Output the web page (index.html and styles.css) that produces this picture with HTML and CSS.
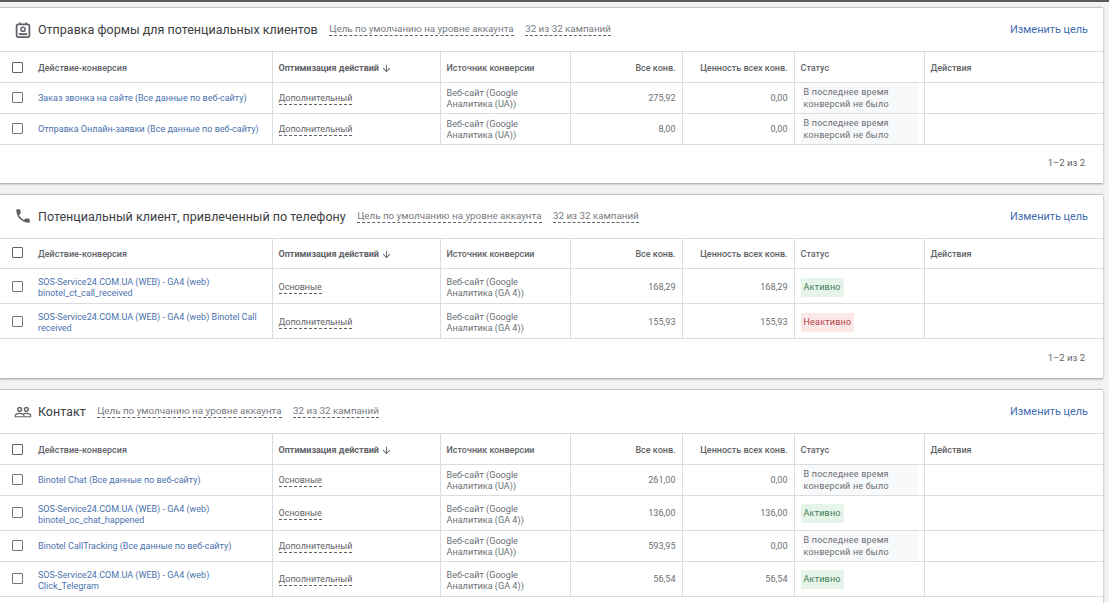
FILE: index.html
```html
<!DOCTYPE html>
<html lang="ru">
<head>
    <meta charset="UTF-8">
    <meta name="viewport" content="width=device-width, initial-scale=1.0">
    <title>Цели конверсий</title>
    <link rel="stylesheet" href="styles.css">
</head>
<body>
    <div class="top-band"></div>

    <!-- Отправка формы -->
    <section class="card">
        <div class="card-head">
            <svg class="goal-icon" viewBox="0 0 24 24"><path d="M8 2v3M16 2v3" fill="none" stroke="#5f6368" stroke-width="2.4"/><rect x="3.5" y="4.5" width="17" height="17" rx="2" fill="none" stroke="#5f6368" stroke-width="2.4"/><circle cx="12" cy="11" r="2.8" fill="none" stroke="#5f6368" stroke-width="2"/><path d="M6.5 17.5h11" stroke="#5f6368" stroke-width="2.6"/></svg>
            <h2>Отправка формы для потенциальных клиентов</h2>
            <span class="dashed">Цель по умолчанию на уровне аккаунта</span>
            <span class="dashed">32 из 32 кампаний</span>
            <a class="edit-link">Изменить цель</a>
        </div>
        <table>
            <colgroup><col class="c-name"><col class="c-opt"><col class="c-src"><col class="c-num"><col class="c-num"><col class="c-status"><col></colgroup>
            <thead>
                <tr><th><span class="name-cell"><i class="check"></i>Действие-конверсия</span></th><th class="strong"><span class="sort">Оптимизация действий <svg class="arrow" viewBox="0 0 24 24"><path fill="#5f6368" d="M20 12l-1.41-1.41L13 16.17V4h-2v12.17l-5.58-5.59L4 12l8 8 8-8z"/></svg></span></th><th>Источник конверсии</th><th class="num">Все конв.</th><th class="num">Ценность всех конв.</th><th>Статус</th><th>Действия</th></tr>
            </thead>
            <tbody>
                <tr><td><span class="name-cell"><i class="check"></i><a>Заказ звонка на сайте (Все данные по веб-сайту)</a></span></td><td><span class="dashed opt">Дополнительный</span></td><td class="src">Веб-сайт (Google Аналитика (UA))</td><td class="num">275,92</td><td class="num">0,00</td><td class="status-cell"><span class="badge none">В последнее время конверсий не было</span></td><td></td></tr>
                <tr><td><span class="name-cell"><i class="check"></i><a>Отправка Онлайн-заявки (Все данные по веб-сайту)</a></span></td><td><span class="dashed opt">Дополнительный</span></td><td class="src">Веб-сайт (Google Аналитика (UA))</td><td class="num">8,00</td><td class="num">0,00</td><td class="status-cell"><span class="badge none">В последнее время конверсий не было</span></td><td></td></tr>
            </tbody>
        </table>
        <div class="card-foot">1–2 из 2</div>
    </section>

    <!-- Телефон -->
    <section class="card">
        <div class="card-head">
            <svg class="goal-icon" viewBox="0 0 24 24"><path fill="#5f6368" d="M6.62 10.79c1.44 2.83 3.76 5.14 6.59 6.59l2.2-2.2c.27-.27.67-.36 1.02-.24 1.12.37 2.33.57 3.57.57.55 0 1 .45 1 1V20c0 .55-.45 1-1 1-9.39 0-17-7.61-17-17 0-.55.45-1 1-1h3.5c.55 0 1 .45 1 1 0 1.25.2 2.45.57 3.57.11.35.03.74-.25 1.02l-2.2 2.2z"/></svg>
            <h2>Потенциальный клиент, привлеченный по телефону</h2>
            <span class="dashed">Цель по умолчанию на уровне аккаунта</span>
            <span class="dashed">32 из 32 кампаний</span>
            <a class="edit-link">Изменить цель</a>
        </div>
        <table class="tall">
            <colgroup><col class="c-name"><col class="c-opt"><col class="c-src"><col class="c-num"><col class="c-num"><col class="c-status"><col></colgroup>
            <thead>
                <tr><th><span class="name-cell"><i class="check"></i>Действие-конверсия</span></th><th class="strong"><span class="sort">Оптимизация действий <svg class="arrow" viewBox="0 0 24 24"><path fill="#5f6368" d="M20 12l-1.41-1.41L13 16.17V4h-2v12.17l-5.58-5.59L4 12l8 8 8-8z"/></svg></span></th><th>Источник конверсии</th><th class="num">Все конв.</th><th class="num">Ценность всех конв.</th><th>Статус</th><th>Действия</th></tr>
            </thead>
            <tbody>
                <tr><td><span class="name-cell"><i class="check"></i><a>SOS-Service24.COM.UA (WEB) - GA4 (web) binotel_ct_call_received</a></span></td><td><span class="dashed opt">Основные</span></td><td class="src">Веб-сайт (Google Аналитика (GA 4))</td><td class="num">168,29</td><td class="num">168,29</td><td class="status-cell"><span class="badge active">Активно</span></td><td></td></tr>
                <tr><td><span class="name-cell"><i class="check"></i><a>SOS-Service24.COM.UA (WEB) - GA4 (web) Binotel Call received</a></span></td><td><span class="dashed opt">Дополнительный</span></td><td class="src">Веб-сайт (Google Аналитика (GA 4))</td><td class="num">155,93</td><td class="num">155,93</td><td class="status-cell"><span class="badge inactive">Неактивно</span></td><td></td></tr>
            </tbody>
        </table>
        <div class="card-foot">1–2 из 2</div>
    </section>

    <!-- Контакт -->
    <section class="card card-last">
        <div class="card-head">
            <svg class="goal-icon" viewBox="0 0 24 24"><path fill="#5f6368" d="M16.5 13c-1.2 0-3.07.34-4.5 1-1.43-.67-3.3-1-4.5-1C5.33 13 1 14.08 1 16.25V19h22v-2.75c0-2.17-4.33-3.25-6.5-3.25zm-4 4.5h-10v-1.25c0-.54 2.56-1.75 5-1.75s5 1.21 5 1.75v1.25zm9 0H14v-1.25c0-.46-.2-.86-.52-1.22.88-.3 1.96-.53 3.02-.53 2.44 0 5 1.21 5 1.75v1.25zM7.5 12c1.93 0 3.5-1.57 3.5-3.5S9.43 5 7.5 5 4 6.57 4 8.5 5.57 12 7.5 12zm0-5c.83 0 1.5.67 1.5 1.5S8.33 10 7.5 10 6 9.33 6 8.5 6.67 7 7.5 7zm9 5c1.93 0 3.5-1.57 3.5-3.5S18.43 5 16.5 5 13 6.57 13 8.5s1.57 3.5 3.5 3.5zm0-5c.83 0 1.5.67 1.5 1.5s-.67 1.5-1.5 1.5-1.5-.67-1.5-1.5.67-1.5 1.5-1.5z"/></svg>
            <h2>Контакт</h2>
            <span class="dashed">Цель по умолчанию на уровне аккаунта</span>
            <span class="dashed">32 из 32 кампаний</span>
            <a class="edit-link">Изменить цель</a>
        </div>
        <table>
            <colgroup><col class="c-name"><col class="c-opt"><col class="c-src"><col class="c-num"><col class="c-num"><col class="c-status"><col></colgroup>
            <thead>
                <tr><th><span class="name-cell"><i class="check"></i>Действие-конверсия</span></th><th class="strong"><span class="sort">Оптимизация действий <svg class="arrow" viewBox="0 0 24 24"><path fill="#5f6368" d="M20 12l-1.41-1.41L13 16.17V4h-2v12.17l-5.58-5.59L4 12l8 8 8-8z"/></svg></span></th><th>Источник конверсии</th><th class="num">Все конв.</th><th class="num">Ценность всех конв.</th><th>Статус</th><th>Действия</th></tr>
            </thead>
            <tbody>
                <tr><td><span class="name-cell"><i class="check"></i><a>Binotel Chat (Все данные по веб-сайту)</a></span></td><td><span class="dashed opt">Основные</span></td><td class="src">Веб-сайт (Google Аналитика (UA))</td><td class="num">261,00</td><td class="num">0,00</td><td class="status-cell"><span class="badge none">В последнее время конверсий не было</span></td><td></td></tr>
                <tr class="tall-row"><td><span class="name-cell"><i class="check"></i><a>SOS-Service24.COM.UA (WEB) - GA4 (web) binotel_oc_chat_happened</a></span></td><td><span class="dashed opt">Основные</span></td><td class="src">Веб-сайт (Google Аналитика (GA 4))</td><td class="num">136,00</td><td class="num">136,00</td><td class="status-cell"><span class="badge active">Активно</span></td><td></td></tr>
                <tr><td><span class="name-cell"><i class="check"></i><a>Binotel CallTracking (Все данные по веб-сайту)</a></span></td><td><span class="dashed opt">Дополнительный</span></td><td class="src">Веб-сайт (Google Аналитика (UA))</td><td class="num">593,95</td><td class="num">0,00</td><td class="status-cell"><span class="badge none">В последнее время конверсий не было</span></td><td></td></tr>
                <tr class="tall-row"><td><span class="name-cell"><i class="check"></i><a>SOS-Service24.COM.UA (WEB) - GA4 (web) Click_Telegram</a></span></td><td><span class="dashed opt">Дополнительный</span></td><td class="src">Веб-сайт (Google Аналитика (GA 4))</td><td class="num">56,54</td><td class="num">56,54</td><td class="status-cell"><span class="badge active">Активно</span></td><td></td></tr>
            </tbody>
        </table>
    </section>
</body>
</html>
```

FILE: styles.css
```css
html, body {
    height: 100%;
    overflow: hidden;
}

body {
    margin: 0;
    background-color: #f1f3f4;
    font-family: Roboto, "Noto Sans", sans-serif;
    font-size: 9.1px;
    color: #6b6f73;
}

.top-band {
    height: 2px;
    margin-bottom: 5px;
    background-color: #5a5a5a;
}

.card {
    width: 1103px;
    margin-bottom: 11px;
    background: white;
    border-top: 1px solid #c4c6c8;
    box-shadow: 0 1px 2px rgba(60,64,67,0.5);
}

.card-last {
    height: 214px;
    margin-bottom: 0;
}

.card-head {
    display: flex;
    align-items: center;
    gap: 11.5px;
    height: 43px;
    padding: 0 15px;
    border-bottom: 1px solid #dadce0;
    font-size: 9.8px;
}

.goal-icon {
    width: 18px;
    height: 18px;
    margin-left: -1px;
    margin-right: -5.5px;
    flex-shrink: 0;
}

.card-head h2 {
    margin: 0;
    font-size: 12.5px;
    font-weight: 400;
    color: #3c4043;
}

.dashed {
    border-bottom: 1px dashed #5f6368;
    line-height: 12px;
    color: #777b80;
}

.edit-link {
    margin-left: auto;
    font-size: 10.9px;
    color: #3f6cb0;
}

table {
    width: 100%;
    border-collapse: collapse;
    table-layout: fixed;
}

.c-name { width: 272px; }
.c-opt { width: 168px; }
.c-src { width: 130px; }
.c-num { width: 112px; }
.c-status { width: 130px; }

th, td {
    box-sizing: border-box;
    height: 31px;
    padding: 2px 6px 0;
    border-right: 1px solid #dadce0;
    border-bottom: 1px solid #dadce0;
    line-height: 11px;
    text-align: left;
}

th:last-child, td:last-child {
    border-right: none;
}

th {
    height: 30px;
    padding-top: 3px;
    font-size: 9px;
    font-weight: 500;
    color: #5f6368;
}

th.strong {
    font-weight: 700;
}

.tall td, .tall-row td {
    height: 35px;
}

.tall td:first-child, .tall-row td:first-child,
.tall td.src, .tall-row td.src {
    padding-top: 4px;
}

.num {
    text-align: right;
}

.sort {
    display: flex;
    align-items: center;
    gap: 2px;
}

.arrow {
    width: 11px;
    height: 11px;
}

.name-cell {
    display: flex;
    align-items: center;
    gap: 15px;
    margin-left: 6px;
    font-size: 9px;
}

.check {
    width: 9px;
    height: 9px;
    flex-shrink: 0;
    margin-bottom: 2px;
    border: 1px solid #70757a;
    border-radius: 1px;
}

th .check {
    margin-bottom: 1px;
    border-color: #5f6368;
}

.tall .check, .tall-row .check {
    margin-bottom: 4px;
}

.name-cell a {
    color: #4a72ad;
}

.opt {
    display: inline-block;
    font-size: 9px;
    color: #5f6368;
}

.status-cell {
    padding: 0 6px;
    font-size: 9px;
    letter-spacing: 0.2px;
}

.tall .status-cell, .tall-row .status-cell {
    padding-top: 2px;
}

.badge {
    display: inline-block;
    padding: 4px 3px;
    line-height: 11px;
}

.badge.none {
    display: block;
    padding: 3px;
    background-color: #f8f9fa;
    line-height: 12px;
}

.badge.active {
    background-color: #e6f4ea;
    color: #3b7d52;
}

.badge.inactive {
    background-color: #fce8e6;
    color: #b3404a;
}

.card-foot {
    display: flex;
    align-items: center;
    justify-content: flex-end;
    height: 36px;
    padding-bottom: 2px;
    padding-right: 18px;
    font-size: 9.5px;
    color: #5f6368;
}

.tall + .card-foot {
    height: 37px;
}
```
